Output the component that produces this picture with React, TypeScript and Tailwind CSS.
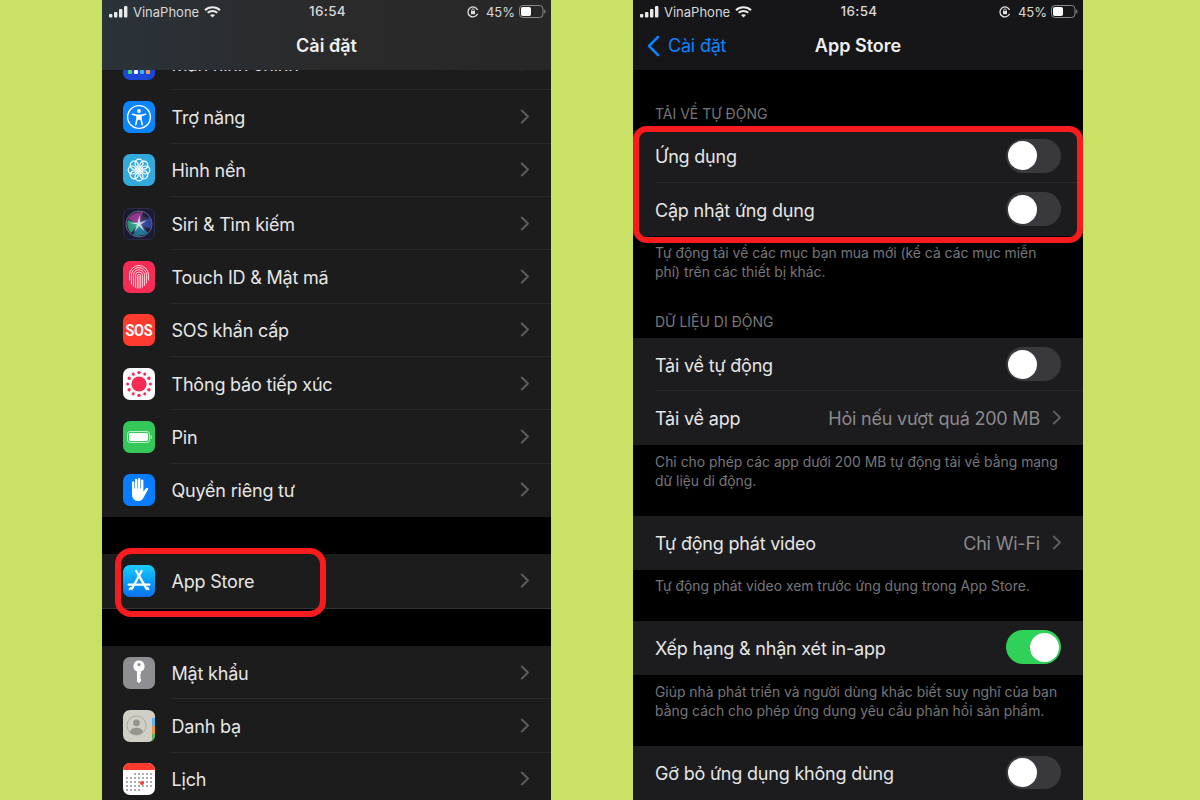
import React from "react";

const Chevron = ({ className = "" }: { className?: string }) => (
  <svg width="10" height="15" viewBox="0 0 10 15" className={className} fill="none" stroke="#5c5c60" strokeWidth="2" strokeLinecap="round" strokeLinejoin="round">
    <polyline points="1.8,1.5 8,7.5 1.8,13.5" />
  </svg>
);

const Tile = ({ className, children }: { className: string; children?: React.ReactNode }) => (
  <div className={`w-[32px] h-[32px] rounded-[7px] shrink-0 overflow-hidden relative flex items-center justify-center ${className}`}>{children}</div>
);

const HomeIcon = () => (
  <Tile className="bg-[#1b48d8]">
    <div className="flex gap-[2px] mt-[16px]">
      <span className="w-[4px] h-[4px] rounded-[1px] bg-[#4cd964]" />
      <span className="w-[4px] h-[4px] rounded-[1px] bg-white" />
      <span className="w-[4px] h-[4px] rounded-[1px] bg-[#3fb5f5]" />
      <span className="w-[4px] h-[4px] rounded-[1px] bg-[#f59a3c]" />
    </div>
  </Tile>
);

const AccessIcon = () => (
  <Tile className="bg-[#0a84ff]">
    <svg width="32" height="32" viewBox="0 0 32 32" fill="none" stroke="#fff">
      <circle cx="16" cy="16" r="11.4" strokeWidth="1.4" />
      <circle cx="16" cy="10" r="1.9" fill="#fff" stroke="none" />
      <path d="M9.5 13.2 L14 14.4 V18 L12.8 23.6 M22.5 13.2 L18 14.4 V18 L19.2 23.6 M14 14.4 H18 M14 18 H18" strokeWidth="1.6" strokeLinecap="round" strokeLinejoin="round" />
      <rect x="14" y="14.2" width="4" height="4.4" fill="#fff" stroke="none" />
    </svg>
  </Tile>
);

const WallpaperIcon = () => (
  <Tile className="bg-[#34aadc]">
    <svg width="32" height="32" viewBox="0 0 32 32" fill="none" stroke="#fff" strokeWidth="1.2">
      {[0, 45, 90, 135, 180, 225, 270, 315].map((a) => (
        <circle key={a} cx="16" cy="9.2" r="4" transform={`rotate(${a} 16 16)`} />
      ))}
      <circle cx="16" cy="16" r="2.2" fill="#fff" stroke="none" />
    </svg>
  </Tile>
);

const SiriIcon = () => (
  <Tile className="bg-[#1b1a33] border border-[#2c2b48]">
    <svg width="32" height="32" viewBox="0 0 32 32" className="shrink-0">
      <defs>
        <radialGradient id="siriBase" cx="50%" cy="50%" r="50%">
          <stop offset="0%" stopColor="#58708f" />
          <stop offset="75%" stopColor="#2a2340" />
          <stop offset="100%" stopColor="#17152c" />
        </radialGradient>
      </defs>
      <circle cx="16" cy="16" r="13" fill="url(#siriBase)" stroke="#7f7c9c" strokeWidth="0.8" />
      <path d="M16 16 L5 11 Q9 3.5 20 4 Z" fill="#b93cae" opacity="0.7" />
      <path d="M16 16 L27 9 Q30 14 28 21 Z" fill="#2f55c4" opacity="0.65" />
      <path d="M16 16 L25 25 Q18 29.5 10 27 Z" fill="#2196b8" opacity="0.7" />
      <path d="M16 16 L8 25 Q2.5 18 5 12 Z" fill="#2ecf9e" opacity="0.65" />
      <polygon points="16.5,7 17.2,14.4 24,12 18,16.6 21.5,23 16,18.3 11.5,24 14,16.6 7,15 14.6,14.6" fill="#fff" opacity="0.72" />
    </svg>
  </Tile>
);

const TouchIcon = () => (
  <Tile className="bg-[#f72c55]">
    <svg width="32" height="32" viewBox="0 0 32 32" fill="none" stroke="#ffd9e0" strokeWidth="0.95" strokeLinecap="round">
      <path d="M6.5 19 V14 A9.5 9.5 0 0 1 25.5 14 V19" />
      <path d="M8.4 23 V14.2 A7.6 7.6 0 0 1 23.6 14.2 V22" />
      <path d="M10.4 25 V14.4 A5.6 5.6 0 0 1 21.6 14.4 V24.5" />
      <path d="M12.4 26.5 V14.6 A3.6 3.6 0 0 1 19.6 14.6 V26" />
      <path d="M14.3 27 V15 A1.7 1.7 0 0 1 17.7 15 V27" />
      <path d="M16 15 V27" />
    </svg>
  </Tile>
);

const SosIcon = () => (
  <Tile className="bg-[#ff3b30]">
    <span className="text-white text-[17px] font-bold tracking-[-0.3px] font-['Roboto',sans-serif] scale-x-[0.85] whitespace-nowrap">SOS</span>
  </Tile>
);

const ExposureIcon = () => (
  <Tile className="bg-white">
    <svg width="32" height="32" viewBox="0 0 32 32" fill="#f72c55">
      <circle cx="16" cy="16" r="7.6" />
      {[0, 30, 60, 90, 120, 150, 180, 210, 240, 270, 300, 330].map((a) => (
        <circle key={a} cx="16" cy="4.6" r={a % 60 === 0 ? 1.7 : 1.5} transform={`rotate(${a} 16 16)`} />
      ))}
    </svg>
  </Tile>
);

const BatteryIcon = () => (
  <Tile className="bg-[#34c759]">
    <svg width="32" height="32" viewBox="0 0 32 32" fill="none">
      <rect x="4.5" y="10.5" width="22" height="11" rx="2.6" stroke="#bdeecb" strokeWidth="1" />
      <rect x="6" y="12" width="19" height="8" rx="1.4" fill="#fff" />
      <rect x="27.6" y="14.2" width="1.2" height="3.6" rx="0.6" fill="#bdeecb" />
    </svg>
  </Tile>
);

const HandIcon = () => (
  <Tile className="bg-[#0a7cff]">
    <svg width="32" height="32" viewBox="0 0 32 32" fill="#fff">
      <path d="M9 14 V8.5 a1.2 1.2 0 0 1 2.4 0 V14.5 h0.6 V6 a1.2 1.2 0 0 1 2.4 0 V14.5 h0.6 V5.2 a1.2 1.2 0 0 1 2.4 0 V14.5 h0.6 V6.8 a1.2 1.2 0 0 1 2.4 0 V17.5 l2.6 -3.2 c1 -1.2 2.8 -0.2 2 1.2 l-3.6 6.4 C20 25.5 18 27 15 27 C11 27 9 24 9 20 Z" />
    </svg>
  </Tile>
);

const AppStoreIcon = () => (
  <Tile className="bg-linear-to-b from-[#1ecbfc] to-[#1170ee]">
    <svg width="32" height="32" viewBox="0 0 32 32" fill="none" stroke="#fff" strokeWidth="2.3" strokeLinecap="round">
      <path d="M18.6 6 L9 23.8 M13.2 6 L23.6 23.8" />
      <path d="M5.5 19.6 H26.5" strokeWidth="2.1" />
      <path d="M6.6 24.4 L7.8 22.8 M25.6 24.4 L24.4 22.8" strokeWidth="1.8" />
    </svg>
  </Tile>
);

const KeyIcon = () => (
  <Tile className="bg-[#8e8e93]">
    <svg width="32" height="32" viewBox="0 0 32 32" fill="#fff">
      <path fillRule="evenodd" d="M16 3.5 a5.7 5.7 0 0 1 2 11 V17 l-1.2 1.2 1.2 1.4 -1.2 1.2 1.2 1.3 V24 l-2 2.2 -2 -2 V14.5 a5.7 5.7 0 0 1 2 -11 Z M16 6 a1.6 1.6 0 1 0 0.01 0 Z" />
    </svg>
  </Tile>
);

const ContactsIcon = () => (
  <Tile className="bg-[#d1cfc5]">
    <div className="absolute right-0 top-0 bottom-0 w-[3.5px] flex flex-col">
      <span className="h-[8px] bg-[#d1cfc5]" />
      <span className="flex-1 bg-[#5ab4ee]" />
      <span className="flex-1 bg-[#ec9a2e]" />
      <span className="flex-1 bg-[#58b85c]" />
    </div>
    <svg width="32" height="32" viewBox="0 0 32 32" fill="#97958d" className="-ml-[3px]">
      <circle cx="14.5" cy="15.5" r="9.6" fill="none" stroke="#a9a79f" strokeWidth="1" />
      <circle cx="14.5" cy="12.8" r="3.4" />
      <path d="M8 22 C9 18.5 12 17.8 14.5 17.8 C17 17.8 20 18.5 21 22 C19.5 24 17 25 14.5 25 C12 25 9.5 24 8 22 Z" />
    </svg>
  </Tile>
);

const CalendarIcon = () => (
  <Tile className="bg-white">
    <svg width="32" height="32" viewBox="0 0 32 32">
      <rect x="0" y="0" width="32" height="7" fill="#ff3b30" />
      {[11, 15, 19, 23, 27].map((y) =>
        [4, 8, 12, 16, 20, 24, 28].map((x) =>
          (y === 11 && x < 12) || (y === 27 && x > 16) ? null : <circle key={`${x}-${y}`} cx={x} cy={y} r="0.75" fill="#333" />
        )
      )}
      <circle cx="19" cy="20" r="2" fill="#ff3b30" />
    </svg>
  </Tile>
);

const StatusBar = () => (
  <div className="h-[23px] grid grid-cols-[1fr_auto_1fr] items-center pl-[7px] pr-[5px] text-[#d8d8d8] text-[13px] leading-none">
    <div className="flex items-center">
      <svg width="19" height="12" viewBox="0 0 19 12" fill="#e8e8e8">
        <rect x="0" y="8" width="3.4" height="3.6" rx="1" />
        <rect x="5" y="6" width="3.4" height="5.6" rx="1" />
        <rect x="10" y="3" width="3.4" height="8.6" rx="1" />
        <rect x="15" y="0" width="3.4" height="11.6" rx="1" />
      </svg>
      <span className="ml-[5px] pt-[1px]">VinaPhone</span>
      <svg width="17" height="12" viewBox="0 0 17 12" className="ml-[5px]" fill="none" stroke="#e8e8e8" strokeWidth="2">
        <path d="M1 4.2 C5 0.3 12 0.3 16 4.2" />
        <path d="M3.7 6.8 C6.3 4.3 10.7 4.3 13.3 6.8" />
        <path d="M8.5 11.5 L6 9.1 C7.4 8 9.6 8 11 9.1 Z" fill="#e8e8e8" stroke="none" />
      </svg>
    </div>
    <span className="font-medium text-[13.5px] tracking-[0.3px] pt-[1px]">16:54</span>
    <div className="flex items-center justify-end">
      <svg width="12" height="12" viewBox="0 0 12 12" fill="none" stroke="#e0e0e0" strokeWidth="1.3">
        <path d="M10.6 7.8 A5 5 0 1 1 10.6 4" />
        <rect x="4" y="5" width="4" height="3.2" fill="#e0e0e0" stroke="none" />
        <path d="M4.8 5 V4 a1.2 1.2 0 0 1 2.4 0 V5" strokeWidth="0.8" />
      </svg>
      <span className="ml-[7px] pt-[1px]">45%</span>
      <svg width="27" height="13" viewBox="0 0 27 13" className="ml-[4px]" fill="none">
        <rect x="0.5" y="0.5" width="23.5" height="12" rx="3.4" stroke="#8a8a8a" />
        <rect x="2" y="2" width="10" height="9" rx="1.8" fill="#fff" />
        <path d="M25.2 4.5 C26.2 5 26.4 5.6 26.4 6.5 C26.4 7.4 26.2 8 25.2 8.5 Z" fill="#8a8a8a" />
      </svg>
    </div>
  </div>
);

const menuGroupOne = [
  { label: "Trợ năng", icon: <AccessIcon /> },
  { label: "Hình nền", icon: <WallpaperIcon /> },
  { label: "Siri & Tìm kiếm", icon: <SiriIcon /> },
  { label: "Touch ID & Mật mã", icon: <TouchIcon /> },
  { label: "SOS khẩn cấp", icon: <SosIcon /> },
  { label: "Thông báo tiếp xúc", icon: <ExposureIcon /> },
  { label: "Pin", icon: <BatteryIcon /> },
  { label: "Quyền riêng tư", icon: <HandIcon /> },
];

const menuGroupTwo = [
  { label: "Mật khẩu", icon: <KeyIcon /> },
  { label: "Danh bạ", icon: <ContactsIcon /> },
  { label: "Lịch", icon: <CalendarIcon /> },
];

const MenuRow = ({ label, icon, last = false }: { label: string; icon: React.ReactNode; last?: boolean }) => (
  <div className="h-[53.33px] flex items-center pl-[21px] bg-[#1c1c1c]">
    {icon}
    <div className={`ml-[16.5px] flex-1 self-stretch flex items-center justify-between pr-[21px] border-b ${last ? "border-transparent" : "border-[#2a2a2c]"}`}>
      <span className="text-[18px] tracking-[-0.2px] pt-[2px] text-[#e6e6e6]">{label}</span>
      <Chevron />
    </div>
  </div>
);

const Toggle = ({ on = false }: { on?: boolean }) => (
  <div className={`w-[55px] h-[33.5px] rounded-full flex items-center px-[2px] ${on ? "bg-[#30d158] justify-end" : "bg-[#39393d] justify-start"}`}>
    <span className="w-[29px] h-[29px] rounded-full bg-white" />
  </div>
);

const SettingRow = ({ label, value, on, toggle = false, last = false, tall = false }: { label: string; value?: string; on?: boolean; toggle?: boolean; last?: boolean; tall?: boolean }) => (
  <div className={`pl-[22px] bg-[#1c1c1e] ${tall ? "h-[54px]" : "h-[53.33px]"}`}>
    <div className={`h-full flex items-center justify-between pr-[22px] border-b ${last ? "border-transparent" : "border-[#2a2a2c]"}`}>
      <span className="text-[18px] tracking-[-0.2px] pt-[2px] text-[#e6e6e6]">{label}</span>
      {toggle ? (
        <Toggle on={on} />
      ) : (
        <div className="flex items-center gap-[12px] -mr-[1px]">
          <span className="text-[18px] tracking-[-0.2px] pt-[2px] text-[#8a8a8e]">{value}</span>
          <Chevron />
        </div>
      )}
    </div>
  </div>
);

const SectionHead = ({ text, height }: { text: string; height: string }) => (
  <div className={`flex items-end pl-[22px] pb-[7px] leading-[19px] text-[14px] text-[#77777b] ${height}`}>{text}</div>
);

const Note = ({ lines, className }: { lines: string[]; className: string }) => (
  <div className={`pl-[22px] text-[13.9px] leading-[19px] text-[#77777b] ${className}`}>
    {lines.map((l) => (
      <div key={l}>{l}</div>
    ))}
  </div>
);

export default function App() {
  return (
    <div className="w-[1200px] h-[800px] overflow-hidden bg-[#c9e265] flex pl-[102px] gap-[82px] font-['Inter','Noto_Sans',sans-serif]">
      {/* man hinh cai dat */}
      <div className="relative w-[449px] h-[800px] overflow-hidden bg-black shrink-0">
        <div className="h-[70px] bg-linear-to-r from-[#2a3339] via-[#2a2a2b] to-[#272727]">
          <StatusBar />
          <div className="h-[47px] pb-[2px] flex items-center justify-center text-[18px] font-semibold text-[#efefef]">Cài đặt</div>
        </div>
        <div className="h-[20.3px] overflow-hidden">
          <div className="-mt-[33.03px]">
            <MenuRow label="Màn hình chính" icon={<HomeIcon />} />
          </div>
        </div>
        {menuGroupOne.map((item, i) => (
          <MenuRow key={item.label} label={item.label} icon={item.icon} last={i === menuGroupOne.length - 1} />
        ))}
        <div className="h-[37.3px]" />
        <div className="border-b border-[#333335]">
          <MenuRow label="App Store" icon={<AppStoreIcon />} last />
        </div>
        <div className="h-[37.5px]" />
        {menuGroupTwo.map((item) => (
          <MenuRow key={item.label} label={item.label} icon={item.icon} />
        ))}
        <div className="absolute left-[13px] top-[548px] w-[211px] h-[69px] border-[6px] border-[#f81c1f] rounded-[16px]" />
      </div>

      {/* man hinh app store */}
      <div className="relative w-[450px] h-[800px] overflow-hidden bg-black shrink-0">
        <div className="h-[70px] bg-[#161618]">
          <StatusBar />
          <div className="h-[47px] pb-[2px] relative flex items-center justify-center text-[18px] font-semibold text-[#efefef]">
            App Store
            <div className="absolute left-[14px] top-0 h-[45px] flex items-center gap-[8px] text-[#0a84ff] font-normal tracking-[-0.2px]">
              <svg width="13" height="22" viewBox="0 0 13 22" fill="none" stroke="#0a84ff" strokeWidth="2.5" strokeLinecap="round" strokeLinejoin="round">
                <polyline points="11,2 2,11 11,20" />
              </svg>
              <span>Cài đặt</span>
            </div>
          </div>
        </div>
        <SectionHead text="TẢI VỀ TỰ ĐỘNG" height="h-[59.7px]" />
        <SettingRow label="Ứng dụng" toggle />
        <SettingRow label="Cập nhật ứng dụng" toggle last />
        <Note className="pt-[8px]" lines={["Tự động tải về các mục bạn mua mới (kể cả các mục miễn", "phí) trên các thiết bị khác."]} />
        <SectionHead text="DỮ LIỆU DI ĐỘNG" height="h-[55.7px]" />
        <SettingRow label="Tải về tự động" toggle />
        <SettingRow label="Tải về app" value="Hỏi nếu vượt quá 200 MB" last />
        <Note className="pt-[8px] pb-[25.3px]" lines={["Chỉ cho phép các app dưới 200 MB tự động tải về bằng mạng", "dữ liệu di động."]} />
        <SettingRow label="Tự động phát video" value="Chỉ Wi-Fi" last tall />
        <Note className="pt-[7px] pb-[24.7px]" lines={["Tự động phát video xem trước ứng dụng trong App Store."]} />
        <SettingRow label="Xếp hạng & nhận xét in-app" toggle on last tall />
        <Note className="pt-[8px] pb-[25.3px]" lines={["Giúp nhà phát triển và người dùng khác biết suy nghĩ của bạn", "bằng cách cho phép ứng dụng yêu cầu phản hồi sản phẩm."]} />
        <SettingRow label="Gỡ bỏ ứng dụng không dùng" toggle last tall />
        <div className="absolute left-0 top-[126px] w-[450px] h-[117px] border-[6px] border-[#f81c1f] rounded-[14px]" />
      </div>
    </div>
  );
}
